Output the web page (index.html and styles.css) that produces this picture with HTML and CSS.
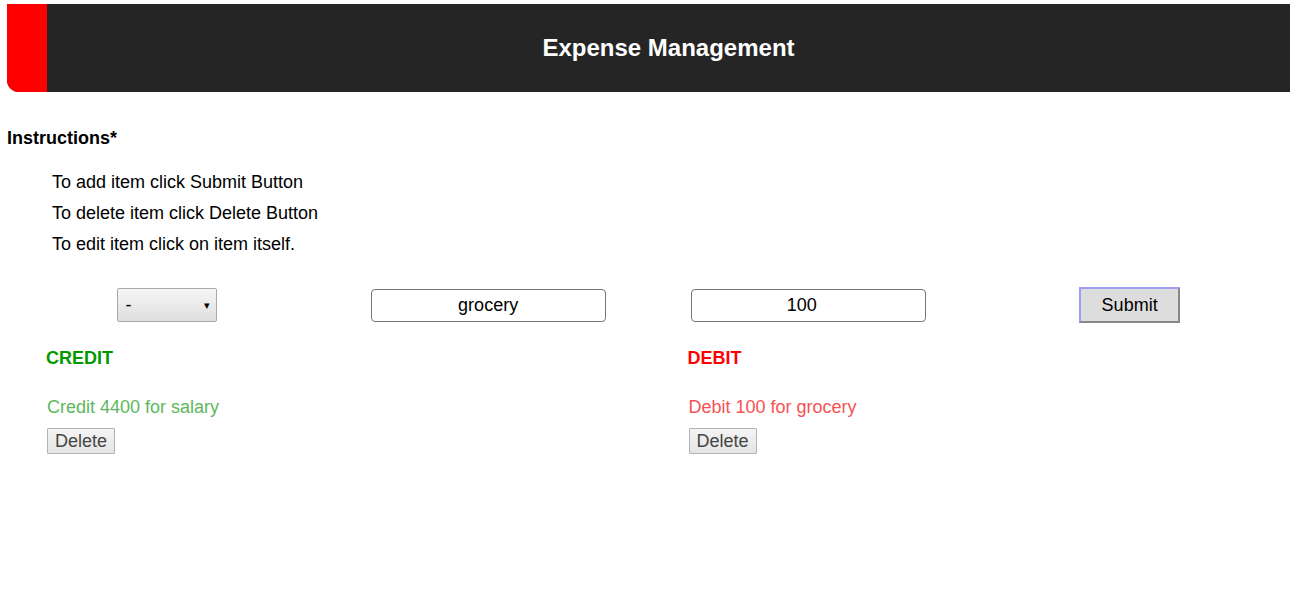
FILE: index.html
```html
<!DOCTYPE html>
<html>
<head>
<meta charset="utf-8">
<title>Expense Management</title>
<link rel="stylesheet" href="styles.css">
</head>
<body>
<header class="topbar">
  <div class="accent"></div>
  <h1 class="title">Expense Management</h1>
</header>
<div class="instructions-title">Instructions*</div>
<ul class="instructions">
  <li>To add item click Submit Button</li>
  <li>To delete item click Delete Button</li>
  <li>To edit item click on item itself.</li>
</ul>
<form class="entry">
  <div class="cell">
    <div class="select"><span>-</span><span class="arrow">&#9662;</span></div>
  </div>
  <div class="cell"><input class="field" type="text" value="grocery"></div>
  <div class="cell"><input class="field number" type="text" value="100"></div>
  <div class="cell"><button type="button" class="submit">Submit</button></div>
</form>
<div class="ledger">
  <section class="col">
    <div class="heading credit">CREDIT</div>
    <div class="item credit-item">Credit 4400 for salary</div>
    <button type="button" class="delete">Delete</button>
  </section>
  <section class="col">
    <div class="heading debit">DEBIT</div>
    <div class="item debit-item">Debit 100 for grocery</div>
    <button type="button" class="delete">Delete</button>
  </section>
</div>
</body>
</html>
```

FILE: styles.css
```css
html, body {
  background: #ffffff;
}
body {
  margin: 4px 8px 0 7px;
  font-family: "Liberation Sans", Arial, sans-serif;
  color: #000;
}
.topbar {
  display: flex;
  height: 88px;
  background: #252525;
  border-bottom-left-radius: 12px;
  overflow: hidden;
}
.accent {
  width: 40px;
  background: #ff0000;
  flex: none;
}
.title {
  flex: 1;
  margin: 0;
  text-align: center;
  line-height: 87px;
  font-size: 24px;
  font-weight: bold;
  color: #ffffff;
}
.instructions-title {
  margin-top: 36px;
  font-size: 18px;
  font-weight: bold;
  line-height: 21px;
}
.instructions {
  list-style: none;
  margin: 18px 0 0 0;
  padding: 0 0 0 45px;
  font-size: 18px;
  line-height: 31px;
}
.entry {
  display: grid;
  grid-template-columns: repeat(4, 1fr);
  align-items: center;
  height: 36px;
  margin: 27px 0 0 0;
}
.cell {
  display: flex;
  justify-content: center;
  align-items: center;
}
.select {
  box-sizing: border-box;
  width: 100px;
  height: 34px;
  border: 1px solid #a9a9a9;
  border-radius: 2px;
  background: linear-gradient(#f6f6f6, #dedede);
  display: flex;
  justify-content: space-between;
  align-items: center;
  padding: 0 6px 0 7px;
  font-size: 18px;
}
.arrow {
  font-size: 11px;
}
.field {
  box-sizing: border-box;
  width: 235px;
  height: 33px;
  border: 1px solid #767676;
  border-radius: 4px;
  text-align: center;
  font-family: "Liberation Sans", Arial, sans-serif;
  font-size: 18px;
  color: #000;
  padding: 0;
}
.field.number {
  padding-right: 14px;
}
.submit {
  box-sizing: border-box;
  width: 101px;
  height: 36px;
  background: #dddddd;
  border: 2px solid;
  border-color: #9d9df5 #888888 #888888 #9d9df5;
  font-family: "Liberation Sans", Arial, sans-serif;
  font-size: 18px;
  color: #000;
  padding: 0;
}
.ledger {
  display: grid;
  grid-template-columns: 1fr 1fr;
  margin-top: 25px;
}
.col {
  padding-left: 40px;
  display: flex;
  flex-direction: column;
  align-items: flex-start;
}
.heading {
  font-size: 18px;
  font-weight: bold;
  line-height: 21px;
  margin-left: -1px;
}
.credit { color: #009900; }
.debit { color: #ff0000; }
.item {
  margin-top: 28px;
  font-size: 18px;
  line-height: 21px;
}
.credit-item { color: #5cb85c; }
.debit-item { color: #f45353; }
.delete {
  margin-top: 10px;
  box-sizing: border-box;
  height: 26px;
  padding: 0 6px;
  background: linear-gradient(#f4f4f4, #e4e4e4);
  border: 1px solid #b3b3b3;
  border-radius: 1px;
  font-family: "Liberation Sans", Arial, sans-serif;
  font-size: 18px;
  color: #444;
  width: 68px;
}
```
